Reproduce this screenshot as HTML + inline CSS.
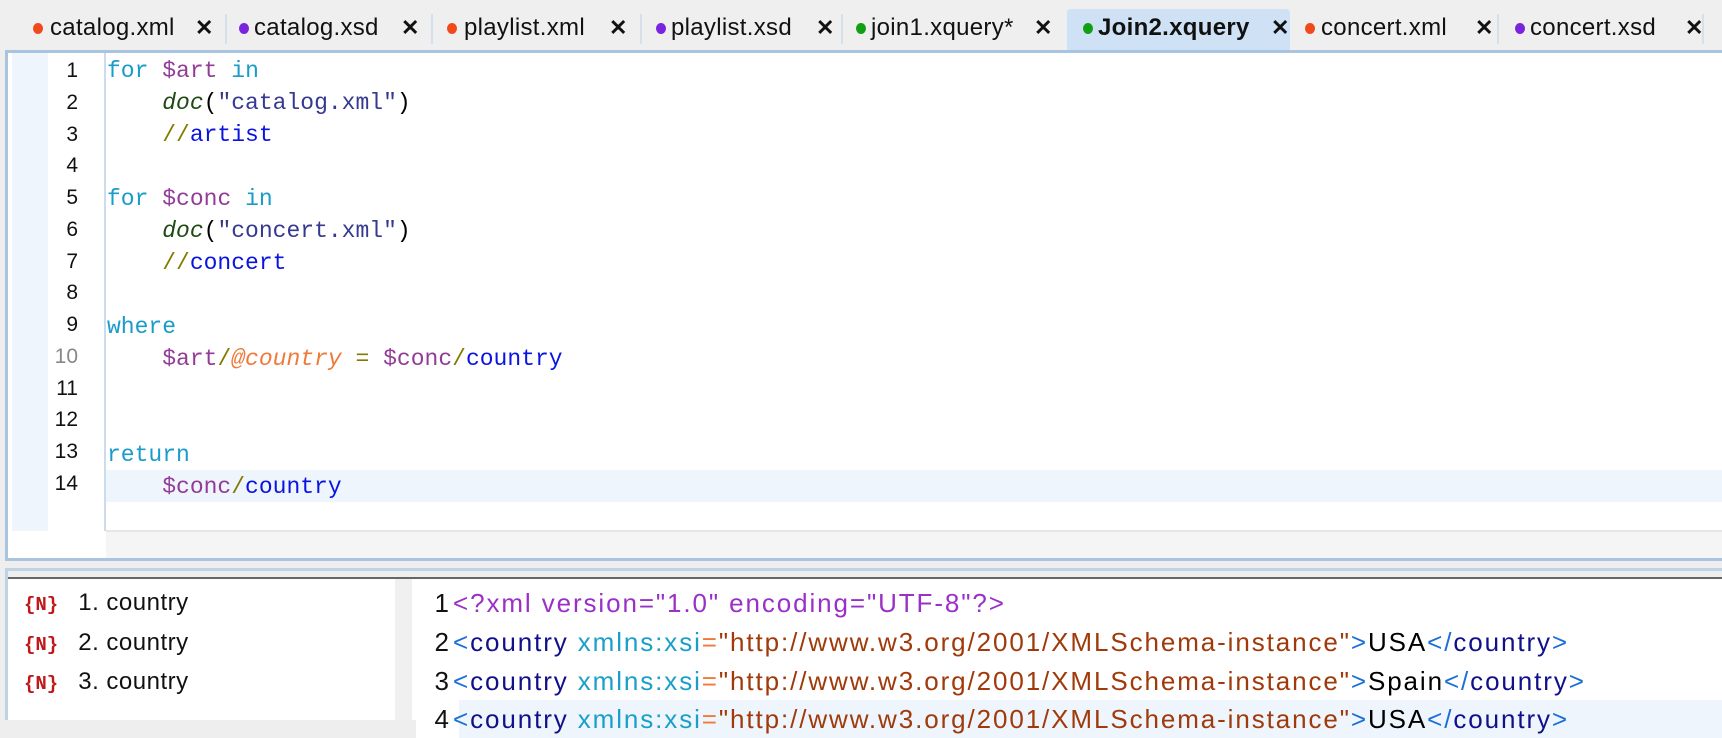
<!DOCTYPE html>
<html><head><meta charset="utf-8"><style>
*{margin:0;padding:0;box-sizing:border-box}
body{width:1722px;height:720px;background:#eeeeee;position:relative;overflow:hidden;font-family:"Liberation Sans",sans-serif}
.tabbar{position:absolute;left:0;top:0;width:1722px;height:50px;background:#efefef}
.tab{position:absolute;top:13px;height:36px;font-size:24px;letter-spacing:0.3px;color:#111;line-height:30px;white-space:nowrap}
.tab .d{position:absolute;top:10px;width:10px;height:11px;border-radius:50%}
.tab .x{position:absolute;top:0;font-weight:bold;font-size:22px}
.sep{position:absolute;top:14px;width:2px;height:30px;background:#d4e0ec}
.act{position:absolute;left:1067px;top:9px;width:223px;height:42px;background:#cfe2f5;border-radius:4px 4px 0 0}
.editor{position:absolute;left:5px;top:50px;width:1717px;height:511px;border:3px solid #a9c4df;border-right:none;background:#fff}
.gut{position:absolute;left:4px;top:0;width:36px;height:478px;background:#eef5fd}
.vl{position:absolute;left:96px;top:0;width:2px;height:478px;background:#cbdcec}
.hs{position:absolute;left:98px;top:477px;right:0;height:28px;background:#f5f5f5;border-top:2px solid #e6e6e6}
.hl{position:absolute;left:98px;top:417px;right:0;height:32px;background:#eef5fc}
.num{position:absolute;left:30px;width:40px;text-align:right;font-family:"Liberation Sans",sans-serif;font-size:21px;color:#111}
.code{position:absolute;left:99px;font-family:"Liberation Mono",monospace;font-size:23px;white-space:pre;line-height:32px}
.k{color:#1a9bc9}.v{color:#933c97}.f{color:#1c4a12;font-style:italic}.s{color:#35398f}.o{color:#857a00}.e{color:#0a14e0}.a{color:#ef7a3a;font-style:italic}
.bot{position:absolute;left:5px;top:568px;width:1717px;height:152px;border:3px solid #bfd3e6;border-right:none;border-bottom:none;background:#eee}
.botin{position:absolute;left:8px;top:577px;width:1714px;height:143px;border-top:2px solid #666;background:#fff}
.div{position:absolute;left:395px;top:579px;width:17px;height:141px;background:#f0f0f0}
.res{position:absolute;left:24px;font-size:24px;letter-spacing:0.5px;color:#111}
.res b{color:#c01818;font-family:"Liberation Mono",monospace;font-size:19px;margin-right:20px;letter-spacing:0}
.xl{position:absolute;left:416px;right:0;height:38px;font-size:26px;letter-spacing:1.9px;line-height:38px;white-space:pre}
.xl .n{display:inline-block;width:37px;text-align:right;padding-right:4px;color:#111;letter-spacing:0}
.lt{color:#1a6fd8}.tg{color:#10108a}.at{color:#1aa0c8}.eq{color:#f07a3a}.av{color:#a03a0a}.dc{color:#9a30c8}
</style></head><body>
<div class="tabbar"></div>
<div class="act"></div>
<div class="tab" style="left:33px"><span class="d" style="background:#f04a1c"></span><span style="margin-left:17px">catalog.xml</span><span class="x" style="left:162px">✕</span></div>
<div class="sep" style="left:225px"></div>
<div class="tab" style="left:239px"><span class="d" style="background:#7a24e0"></span><span style="margin-left:15px">catalog.xsd</span><span class="x" style="left:162px">✕</span></div>
<div class="sep" style="left:431px"></div>
<div class="tab" style="left:447px"><span class="d" style="background:#f04a1c"></span><span style="margin-left:17px">playlist.xml</span><span class="x" style="left:162px">✕</span></div>
<div class="sep" style="left:640px"></div>
<div class="tab" style="left:656px"><span class="d" style="background:#7a24e0"></span><span style="margin-left:15px">playlist.xsd</span><span class="x" style="left:160px">✕</span></div>
<div class="sep" style="left:841px"></div>
<div class="tab" style="left:856px"><span class="d" style="background:#12a012"></span><span style="margin-left:15px">join1.xquery*</span><span class="x" style="left:178px">✕</span></div>
<div class="tab" style="left:1083px"><span class="d" style="background:#12a012"></span><span style="margin-left:15px;font-weight:bold">Join2.xquery</span><span class="x" style="left:188px">✕</span></div>
<div class="tab" style="left:1305px"><span class="d" style="background:#f04a1c"></span><span style="margin-left:16px">concert.xml</span><span class="x" style="left:170px">✕</span></div>
<div class="sep" style="left:1497px"></div>
<div class="tab" style="left:1515px"><span class="d" style="background:#7a24e0"></span><span style="margin-left:15px">concert.xsd</span><span class="x" style="left:170px">✕</span></div>
<div class="sep" style="left:1702px"></div>

<div class="editor">
<div class="gut"></div><div class="hl"></div><div class="vl"></div><div class="hs"></div>
<div class="num" style="top:6px">1</div>
<div class="num" style="top:38px">2</div>
<div class="num" style="top:70px">3</div>
<div class="num" style="top:101px">4</div>
<div class="num" style="top:133px">5</div>
<div class="num" style="top:165px">6</div>
<div class="num" style="top:197px">7</div>
<div class="num" style="top:228px">8</div>
<div class="num" style="top:260px">9</div>
<div class="num" style="top:292px;color:#888">10</div>
<div class="num" style="top:324px">11</div>
<div class="num" style="top:355px">12</div>
<div class="num" style="top:387px">13</div>
<div class="num" style="top:419px">14</div>
<div class="code" style="top:2px"><span class="k">for</span> <span class="v">$art</span> <span class="k">in</span>
    <span class="f">doc</span>(<span class="s">"catalog.xml"</span>)
    <span class="o">//</span><span class="e">artist</span>

<span class="k">for</span> <span class="v">$conc</span> <span class="k">in</span>
    <span class="f">doc</span>(<span class="s">"concert.xml"</span>)
    <span class="o">//</span><span class="e">concert</span>

<span class="k">where</span>
    <span class="v">$art</span><span class="o">/</span><span class="a">@country</span> <span class="o">=</span> <span class="v">$conc</span><span class="o">/</span><span class="e">country</span>


<span class="k">return</span>
    <span class="v">$conc</span><span class="o">/</span><span class="e">country</span></div>
</div>

<div class="bot"></div>
<div class="botin"></div>
<div class="div"></div>
<div class="res" style="top:589px"><b>{N}</b>1. country</div>
<div class="res" style="top:629px"><b>{N}</b>2. country</div>
<div class="res" style="top:668px"><b>{N}</b>3. country</div>
<div class="xl" style="top:584px"><span class="n">1</span><span class="dc">&lt;?xml version="1.0" encoding="UTF-8"?&gt;</span></div>
<div class="xl" style="top:623px"><span class="n">2</span><span class="lt">&lt;</span><span class="tg">country</span> <span class="at">xmlns:xsi</span><span class="eq">=</span><span class="av">"http://www.w3.org/2001/XMLSchema-instance"</span><span class="lt">&gt;</span>USA<span class="lt">&lt;/</span><span class="tg">country</span><span class="lt">&gt;</span></div>
<div class="xl" style="top:662px"><span class="n">3</span><span class="lt">&lt;</span><span class="tg">country</span> <span class="at">xmlns:xsi</span><span class="eq">=</span><span class="av">"http://www.w3.org/2001/XMLSchema-instance"</span><span class="lt">&gt;</span>Spain<span class="lt">&lt;/</span><span class="tg">country</span><span class="lt">&gt;</span></div>
<div class="xl" style="top:700px;background:linear-gradient(90deg,#fff 0 43px,#eef5fc 43px)"><span class="n">4</span><span class="lt">&lt;</span><span class="tg">country</span> <span class="at">xmlns:xsi</span><span class="eq">=</span><span class="av">"http://www.w3.org/2001/XMLSchema-instance"</span><span class="lt">&gt;</span>USA<span class="lt">&lt;/</span><span class="tg">country</span><span class="lt">&gt;</span></div>
</body></html>
